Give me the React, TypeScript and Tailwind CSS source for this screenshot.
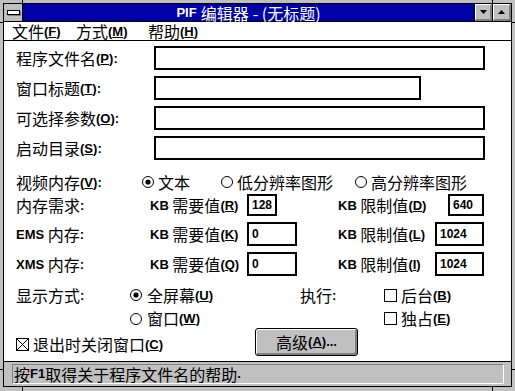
import type {ReactNode} from 'react'

const latin = "font-['Liberation_Sans',sans-serif] text-[13px] font-bold align-[2px]"

function En({children}: {children: ReactNode}) {
  return <span className={latin}>{children}</span>
}

function Key({k, colon}: {k: string; colon?: boolean}) {
  return (
    <span className={latin}>
      (<span className="underline underline-offset-1">{k}</span>){colon ? ':' : ''}
    </span>
  )
}

function Radio({on}: {on?: boolean}) {
  return (
    <svg width="12" height="12" viewBox="0 0 12 12" className="shrink-0">
      <circle cx="6" cy="6" r="5.5" fill="white" stroke="black" />
      {on && <circle cx="6" cy="6" r="2.6" fill="black" />}
    </svg>
  )
}

function Check({on}: {on?: boolean}) {
  return (
    <svg width="13" height="13" viewBox="0 0 13 13" className="shrink-0">
      <rect x="0.5" y="0.5" width="12" height="12" fill="white" stroke="black" />
      {on && <path d="M1 1L12 12M12 1L1 12" stroke="black" />}
    </svg>
  )
}

function Box({w, children}: {w: string; children?: ReactNode}) {
  return (
    <div className={`${w} h-full border-2 border-black bg-white pl-[3px] flex items-center font-['Liberation_Sans',sans-serif] text-[12px] font-bold`}>
      {children}
    </div>
  )
}

function CaptionButton({up}: {up?: boolean}) {
  return (
    <div className="flex h-full items-center justify-center bg-[#c0c0c0] border-t border-l border-white border-b-2 border-r-2 border-b-[#808080] border-r-[#808080]">
      <svg width="7" height="4" viewBox="0 0 7 4">
        <path d={up ? 'M3.5 0L7 4H0Z' : 'M0 0H7L3.5 4Z'} fill="black" />
      </svg>
    </div>
  )
}

export default function App() {
  return (
    <div className="relative w-[515px] h-[391px] overflow-hidden bg-[#c0c0c0] pt-[3px] px-[3px] pb-[4px] text-black font-['Noto_Sans_CJK_SC',sans-serif] text-[16px] leading-[20px]">
      {/* resize corner marks */}
      <div className="absolute left-[22px] top-0 w-px h-[3px] bg-black" />
      <div className="absolute left-[492px] top-0 w-px h-[3px] bg-black" />
      <div className="absolute left-[22px] bottom-0 w-px h-[4px] bg-black" />
      <div className="absolute left-[492px] bottom-0 w-px h-[4px] bg-black" />
      <div className="absolute left-0 top-[22px] w-[3px] h-px bg-black" />
      <div className="absolute right-0 top-[22px] w-[3px] h-px bg-black" />
      <div className="absolute left-0 top-[369px] w-[3px] h-px bg-black" />
      <div className="absolute right-0 top-[369px] w-[3px] h-px bg-black" />

      <div className="flex h-full flex-col border border-black bg-white">
        {/* title bar */}
        <div className="flex h-[18px] shrink-0 border-b border-black">
          <div className="flex w-[19px] items-center justify-center border-r border-black bg-[#c0c0c0]">
            <div className="h-[5px] w-[13px] border border-black bg-white shadow-[1px_1px_0_#808080]" />
          </div>
          <div className="flex flex-1 items-center justify-center bg-[#0000a8] text-white">
            <En>PIF</En>
            <span className="ml-[4px]">编辑器</span>
            <span className="ml-[4px]">- (无标题)</span>
          </div>
          <div className="w-[18px] border-l border-black">
            <CaptionButton />
          </div>
          <div className="w-[19px] border-l border-black">
            <CaptionButton up />
          </div>
        </div>

        {/* menu bar */}
        <div className="flex h-[19px] shrink-0 items-center border-b border-black pl-[8px]">
          <div className="w-[64px]">文件<Key k="F" /></div>
          <div className="w-[72px]">方式<Key k="M" /></div>
          <div>帮助<Key k="H" /></div>
        </div>

        {/* client area */}
        <div className="flex h-[320px] shrink-0 flex-col pl-[12px] pt-[5px]">
          <div className="flex h-[24px] items-center">
            <div className="w-[138px]">程序文件名<Key k="P" colon /></div>
            <Box w="w-[331px]" />
          </div>
          <div className="mt-[6px] flex h-[24px] items-center">
            <div className="w-[138px]">窗口标题<Key k="T" colon /></div>
            <Box w="w-[267px]" />
          </div>
          <div className="mt-[6px] flex h-[24px] items-center">
            <div className="w-[138px]">可选择参数<Key k="O" colon /></div>
            <Box w="w-[331px]" />
          </div>
          <div className="mt-[6px] flex h-[24px] items-center">
            <div className="w-[138px]">启动目录<Key k="S" colon /></div>
            <Box w="w-[331px]" />
          </div>

          <div className="mt-[12px] flex h-[20px] items-center">
            <div className="w-[126px]">视频内存<Key k="V" colon /></div>
            <div className="flex w-[79px] items-center gap-[4px]"><Radio on />文本</div>
            <div className="flex w-[134px] items-center gap-[4px]"><Radio />低分辨率图形</div>
            <div className="flex items-center gap-[4px]"><Radio />高分辨率图形</div>
          </div>

          <div className="mt-[2px] flex h-[22px] items-center">
            <div className="w-[134px]">内存需求<En>:</En></div>
            <div className="flex h-full w-[188px] items-center">
              <div className="w-[97px]"><En>KB</En> 需要值<Key k="R" /></div>
              <Box w="w-[30px]">128</Box>
            </div>
            <div className="flex h-full items-center">
              <div className="w-[110px]"><En>KB</En> 限制值<Key k="D" /></div>
              <Box w="w-[36px]">640</Box>
            </div>
          </div>

          <div className="mt-[6px] flex h-[24px] items-center">
            <div className="w-[134px]"><En>EMS</En> 内存<En>:</En></div>
            <div className="flex h-full w-[188px] items-center">
              <div className="w-[97px]"><En>KB</En> 需要值<Key k="K" /></div>
              <Box w="w-[50px]">0</Box>
            </div>
            <div className="flex h-full items-center">
              <div className="w-[97px]"><En>KB</En> 限制值<Key k="L" /></div>
              <Box w="w-[49px]">1024</Box>
            </div>
          </div>

          <div className="mt-[6px] flex h-[24px] items-center">
            <div className="w-[134px]"><En>XMS</En> 内存<En>:</En></div>
            <div className="flex h-full w-[188px] items-center">
              <div className="w-[97px]"><En>KB</En> 需要值<Key k="Q" /></div>
              <Box w="w-[50px]">0</Box>
            </div>
            <div className="flex h-full items-center">
              <div className="w-[97px]"><En>KB</En> 限制值<Key k="I" /></div>
              <Box w="w-[49px]">1024</Box>
            </div>
          </div>

          <div className="mt-[9px] flex h-[20px] items-center">
            <div className="w-[114px]">显示方式<En>:</En></div>
            <div className="flex w-[170px] items-center gap-[5px]"><Radio on /><span>全屏幕<Key k="U" /></span></div>
            <div className="w-[84px]">执行<En>:</En></div>
            <div className="flex items-center gap-[4px]"><Check /><span>后台<Key k="B" /></span></div>
          </div>

          <div className="mt-[4px] flex h-[19px] items-center">
            <div className="w-[114px]" />
            <div className="flex w-[170px] items-center gap-[5px]"><Radio /><span>窗口<Key k="W" /></span></div>
            <div className="w-[84px]" />
            <div className="flex items-center gap-[4px]"><Check /><span>独占<Key k="E" /></span></div>
          </div>

          <div className="flex h-[28px] items-center">
            <div className="flex w-[239px] items-center gap-[4px] pt-[5px]"><Check on /><span>退出时关闭窗口<Key k="C" /></span></div>
            <button className="flex h-full w-[103px] items-center justify-center rounded-[3px] border border-black bg-[#c0c0c0] shadow-[inset_1px_1px_0_#ffffff,inset_-2px_-2px_0_#808080]">
              高级<Key k="A" /><En>...</En>
            </button>
          </div>
        </div>

        {/* status bar */}
        <div className="flex h-[25px] shrink-0 border-t border-black bg-[#c0c0c0] pl-[8px] pr-[7px] py-[2px]">
          <div className="flex flex-1 items-center border-t border-l border-t-[#808080] border-l-[#808080] border-b border-r border-b-white border-r-white pl-[1px]">
            按<En>F1</En>取得关于程序文件名的帮助<En>.</En>
          </div>
        </div>
      </div>
    </div>
  )
}
